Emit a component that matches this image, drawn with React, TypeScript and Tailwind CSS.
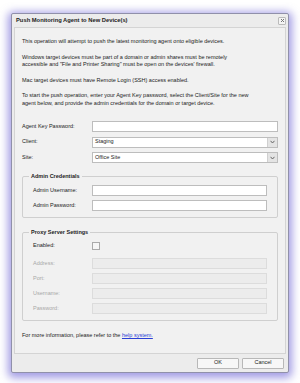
import React from "react";

const font = { fontFamily: '"Liberation Sans", Arial, sans-serif' };

function Field({ label, value, select, disabled, indent }: { label: string; value?: string; select?: boolean; disabled?: boolean; indent?: boolean }) {
  return (
    <div className="flex h-[11px] items-center">
      <span className={`shrink-0 leading-none ${indent ? "w-[59px]" : "w-[70px]"} ${disabled ? "text-[#a8a8a8]" : "text-[#222]"}`}>
        {label}
      </span>
      <div
        className={`flex h-full flex-1 items-center border ${
          disabled ? "border-[#dcdcdc] bg-[#ececec]" : "border-[#bdbdbd] bg-white"
        }`}
      >
        <span className="flex-1 pl-[2px] leading-none text-[#222]">{value}</span>
        {select && (
          <span className="flex h-full w-[10px] items-center justify-center border-l border-[#d0d0d0] bg-[#e4e4e4]">
            <svg width="5" height="4" viewBox="0 0 5 4">
              <path d="M0.5 0.8 L2.5 3 L4.5 0.8" fill="none" stroke="#666" strokeWidth="1" />
            </svg>
          </span>
        )}
      </div>
    </div>
  );
}

export default function App() {
  return (
    <div className="h-[383px] w-[300px] bg-white pl-[11px] pt-[13px] text-[5.5px]" style={font}>
      <div className="flex h-[360px] w-[278px] flex-col rounded-[2px] border border-[#9090aa] bg-[#ececec] shadow-[0_2px_8px_3px_rgba(100,90,210,0.6)]">
        {/* title bar */}
        <div className="flex h-[13px] items-center justify-between pl-[4px] pr-[2px]">
          <span className="text-[5.8px] font-bold text-[#222]">Push Monitoring Agent to New Device(s)</span>
          <span className="flex h-[8px] w-[8px] items-center justify-center rounded-[1px] border border-[#bbb] bg-[#f4f4f4]">
            <svg width="5" height="5" viewBox="0 0 5 5">
              <path d="M1 1 L4 4 M4 1 L1 4" stroke="#777" strokeWidth="1" />
            </svg>
          </span>
        </div>

        {/* body */}
        <div className="mx-[2px] flex h-[327px] flex-col border border-[#d4d4d4] bg-[#f1f1f1] px-[7px] pt-[10px] text-[#222]">
          <div className="flex flex-col gap-[8px] leading-[7.5px]">
            <p>This operation will attempt to push the latest monitoring agent onto eligible devices.</p>
            <p>
              Windows target devices must be part of a domain or admin shares must be remotely
              <br />
              accessible and "File and Printer Sharing" must be open on the devices' firewall.
            </p>
            <p>Mac target devices must have Remote Login (SSH) access enabled.</p>
            <p>
              To start the push operation, enter your Agent Key password, select the Client/Site for the new
              <br />
              agent below, and provide the admin credentials for the domain or target device.
            </p>
          </div>

          <div className="mt-[14px] flex flex-col gap-[4.5px]">
            <Field label="Agent Key Password:" />
            <Field label="Client:" value="Staging" select />
            <Field label="Site:" value="Office Site" select />
          </div>

          <fieldset className="mt-[9px] rounded-[2px] border border-[#cfcfcf] px-[10px] pb-[6px]">
            <legend className="ml-[-4px] px-[2px] font-bold leading-[8px]">Admin Credentials</legend>
            <div className="mt-[5px] flex flex-col gap-[4px]">
              <Field label="Admin Username:" indent />
              <Field label="Admin Password:" indent />
            </div>
          </fieldset>

          <fieldset className="mt-[10px] rounded-[2px] border border-[#cfcfcf] px-[10px] pb-[6px]">
            <legend className="ml-[-4px] px-[2px] font-bold leading-[8px]">Proxy Server Settings</legend>
            <div className="mt-[4px] flex h-[11px] items-center">
              <span className="w-[59px] shrink-0 leading-none">Enabled:</span>
              <span className="h-[8px] w-[8px] border border-[#aaa] bg-[#f6f6f6]" />
            </div>
            <div className="mt-[7px] flex flex-col gap-[4px]">
              <Field label="Address:" disabled indent />
              <Field label="Port:" disabled indent />
              <Field label="Username:" disabled indent />
              <Field label="Password:" disabled indent />
            </div>
          </fieldset>

          <p className="mt-[11px] leading-[7.5px]">
            For more information, please refer to the{" "}
            <span className="text-[#2a3fd6] underline">help system.</span>
          </p>
        </div>

        {/* footer */}
        <div className="flex flex-1 items-center justify-end gap-[3px] pr-[4px]">
          <button className="h-[11px] w-[42px] rounded-[1px] border border-[#b8b8b8] bg-[#f7f7f7] leading-none text-[#222]">
            OK
          </button>
          <button className="h-[11px] w-[42px] rounded-[1px] border border-[#b8b8b8] bg-[#f7f7f7] leading-none text-[#222]">
            Cancel
          </button>
        </div>
      </div>
    </div>
  );
}
